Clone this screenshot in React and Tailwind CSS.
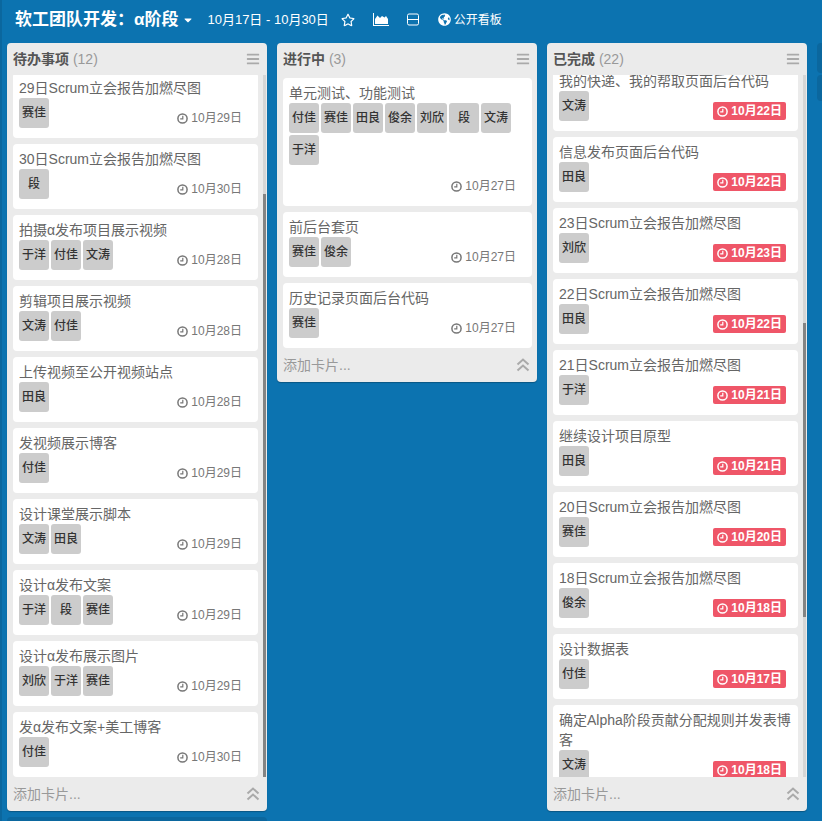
import { FaRegStar, FaGlobeAmericas, FaCaretDown, FaBars } from 'react-icons/fa';

const TODO = [
  { title: '29日Scrum立会报告加燃尽图', members: ['赛佳'], date: '10月29日' },
  { title: '30日Scrum立会报告加燃尽图', members: ['段'], date: '10月30日' },
  { title: '拍摄α发布项目展示视频', members: ['于洋', '付佳', '文涛'], date: '10月28日' },
  { title: '剪辑项目展示视频', members: ['文涛', '付佳'], date: '10月28日' },
  { title: '上传视频至公开视频站点', members: ['田良'], date: '10月28日' },
  { title: '发视频展示博客', members: ['付佳'], date: '10月29日' },
  { title: '设计课堂展示脚本', members: ['文涛', '田良'], date: '10月29日' },
  { title: '设计α发布文案', members: ['于洋', '段', '赛佳'], date: '10月29日' },
  { title: '设计α发布展示图片', members: ['刘欣', '于洋', '赛佳'], date: '10月29日' },
  { title: '发α发布文案+美工博客', members: ['付佳'], date: '10月30日' },
];

const DOING = [
  { title: '单元测试、功能测试', members: ['付佳', '赛佳', '田良', '俊余', '刘欣', '段', '文涛', '于洋'], date: '10月27日' },
  { title: '前后台套页', members: ['赛佳', '俊余'], date: '10月27日' },
  { title: '历史记录页面后台代码', members: ['赛佳'], date: '10月27日' },
];

const DONE = [
  { title: '我的快递、我的帮取页面后台代码', members: ['文涛'], date: '10月22日' },
  { title: '信息发布页面后台代码', members: ['田良'], date: '10月22日' },
  { title: '23日Scrum立会报告加燃尽图', members: ['刘欣'], date: '10月23日' },
  { title: '22日Scrum立会报告加燃尽图', members: ['田良'], date: '10月22日' },
  { title: '21日Scrum立会报告加燃尽图', members: ['于洋'], date: '10月21日' },
  { title: '继续设计项目原型', members: ['田良'], date: '10月21日' },
  { title: '20日Scrum立会报告加燃尽图', members: ['赛佳'], date: '10月20日' },
  { title: '18日Scrum立会报告加燃尽图', members: ['俊余'], date: '10月18日' },
  { title: '设计数据表', members: ['付佳'], date: '10月17日' },
  { title: '确定Alpha阶段贡献分配规则并发表博客', members: ['文涛'], date: '10月18日' },
];

export default function App() {
  return (
    <div className="h-[821px] w-[822px] overflow-hidden border-l-2 border-[#0b679e] bg-[#0c73b0] font-['Liberation_Sans','Noto_Sans_CJK_SC',sans-serif] text-white">
      <header className="flex h-[43px] items-center pb-[4px] pl-[13px]">
        <h1 className="text-[17px] font-bold">软工团队开发：α阶段</h1>
        <FaCaretDown size={12} className="ml-[4px]" />
        <span className="ml-[13px] text-[13px]">10月17日 - 10月30日</span>
        <FaRegStar size={14} className="ml-[12px]" />
        <svg width="16" height="13" viewBox="0 0 16 13" className="ml-[18px]" fill="currentColor">
          <path d="M0 0h1v12h15v1H0z" />
          <path d="M2 11V6l2.500-3.500L7 5l2-2 2.500 1.500L13 3l2 3v5z" />
        </svg>
        <svg width="14" height="13" viewBox="0 0 14 13" className="ml-[17px]" fill="none" stroke="currentColor">
          <rect x="1.5" y="1" width="11" height="11" rx="1.5" />
          <path d="M1.5 6.5h11" />
        </svg>
        <FaGlobeAmericas size={13} className="ml-[18px]" />
        <span className="ml-[3px] text-[12px]">公开看板</span>
      </header>
      <main className="flex items-start gap-[10px] pl-[5px]">
        <div className="flex w-[260px] shrink-0 flex-col gap-[6px]">
          <Column title="待办事项" count={12} cards={TODO} offset="-mt-[2px]" thumb="top-[119px] h-[583px]" />
          <div className="h-[20px] rounded bg-[#0b679e]" />
        </div>
        <Column title="进行中" count={3} cards={DOING} />
        <Column title="已完成" count={22} cards={DONE} done offset="-mt-[9px]" thumb="top-[248px] h-[294px]" />
        <div className="flex w-[10px] shrink-0 flex-col gap-[2px]">
          <div className="h-[30px] rounded-l bg-[#0b679e]" />
          <div className="h-[26px] rounded-l bg-[#0b679e]" />
        </div>
      </main>
    </div>
  );
}

function Column({ title, count, cards, done, offset = '', thumb }) {
  return (
    <section className="w-[260px] shrink-0 rounded bg-[#ebebeb] shadow-[0_1px_1px_rgba(0,0,0,0.25)]">
      <div className="flex h-[32px] items-center justify-between pl-[6px] pr-[7px]">
        <h2 className="text-[14px] font-bold text-[#555]">
          {title} <span className="font-normal text-[#999]">({count})</span>
        </h2>
        <FaBars size={14} className="text-[#aaa]" />
      </div>
      <div className={`relative overflow-hidden ${thumb ? 'h-[702px]' : ''}`}>
        <div className={`${offset} ml-[6px] flex flex-col gap-[6px] ${thumb ? 'w-[245px]' : 'mt-[3px] w-[249px]'}`}>
          {cards.map((c) => <Card key={c.title} {...c} done={done} />)}
        </div>
        {thumb && (
          <div className="absolute inset-y-0 right-[1px] w-[3px] bg-[#d6d6d6]">
            <div className={`absolute left-0 w-[3px] bg-[#848484] ${thumb}`} />
          </div>
        )}
      </div>
      <div className="flex h-[34px] items-center justify-between pl-[6px] pr-[7px] text-[14px] text-[#999]">
        <span>添加卡片...</span>
        <svg width="14" height="14" viewBox="0 0 14 14" fill="none" stroke="#aaa" strokeWidth="2">
          <path d="M1.5 6.5 7 1.5l5.500 5M1.500 12.500 7 7.500l5.500 5" />
        </svg>
      </div>
    </section>
  );
}

function ClockIcon() {
  return (
    <svg width="11" height="11" viewBox="0 0 11 11" fill="none" stroke="currentColor">
      <circle cx="5.5" cy="5.500" r="4.600" strokeWidth="1.500" />
      <path d="M5.800 2.800v3H3.200" strokeWidth="1.200" />
    </svg>
  );
}

function Card({ title, members, date, done }) {
  return (
    <article className="flex shrink-0 flex-col rounded bg-white px-[6px] pb-[11px] pt-[5px]">
      <p className="text-[14px] leading-[20px] text-[#666]">{title}</p>
      <div className="flex flex-wrap gap-[2px]">
        {members.map((m) => (
          <span key={m} className="flex h-[30px] w-[30px] items-center justify-center rounded-[3px] bg-[#ccc] text-[12px] font-medium text-[#333]">{m}</span>
        ))}
      </div>
      <div className={`flex justify-end pr-[6px] ${members.length > 7 ? 'mt-[12px]' : '-mt-[19px]'}`}>
        <span className={`flex h-[18px] items-center gap-[3px] rounded-[2px] px-[4px] text-[12px] ${done ? 'bg-[#ef5668] font-bold text-white' : 'text-[#777]'}`}>
          <ClockIcon />{date}
        </span>
      </div>
    </article>
  );
}
